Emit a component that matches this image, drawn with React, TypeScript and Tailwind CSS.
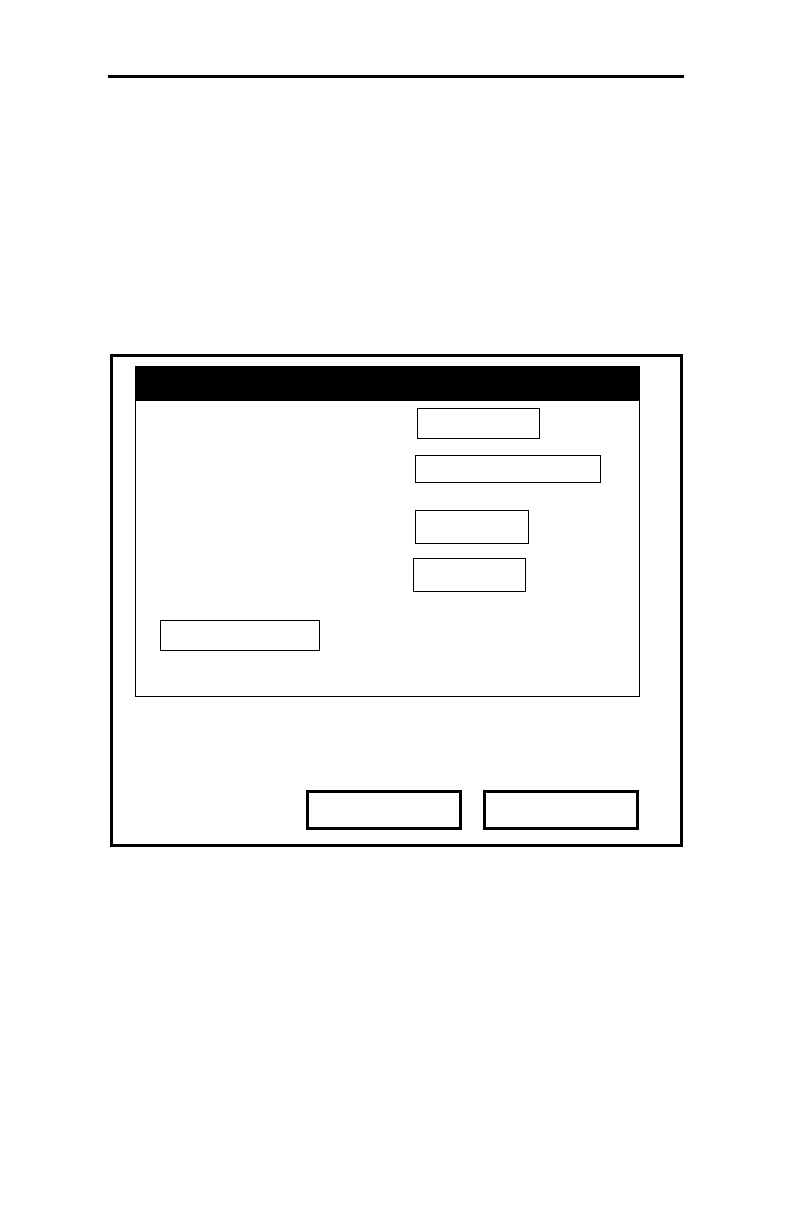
import React from "react";

export default function App() {
  return (
    <div className="w-[792px] h-[1224px] bg-white pt-[75px]" style={{ fontFamily: '"Liberation Sans", Arial, sans-serif' }}>
      <div className="ml-[108px] w-[576px] h-[3px] bg-black" />
      <div className="ml-[110px] mt-[276px] w-[573px] h-[493px] border-[3px] border-black flex flex-col pl-[22px] pr-[40px] pt-[9px]">
        <div className="flex flex-col border border-black border-t-0 pb-[45px]">
          <div className="h-[35px] bg-black -mx-px" />
          <div className="ml-[281px] mt-[7px] w-[123px] h-[31px] border-[1.5px] border-black" />
          <div className="ml-[279px] mt-[16px] w-[186px] h-[28px] border-[1.5px] border-black" />
          <div className="ml-[279px] mt-[27px] w-[114px] h-[34px] border-[1.5px] border-black" />
          <div className="ml-[277px] mt-[14px] w-[113px] h-[34px] border-[1.5px] border-black" />
          <div className="ml-[24px] mt-[28px] w-[160px] h-[31px] border-[1.5px] border-black" />
        </div>
        <div className="mt-[93px] flex justify-end gap-[21px] mr-px">
          <div className="w-[156px] h-[40px] border-[3px] border-black" />
          <div className="w-[156px] h-[40px] border-[3px] border-black" />
        </div>
      </div>
    </div>
  );
}
